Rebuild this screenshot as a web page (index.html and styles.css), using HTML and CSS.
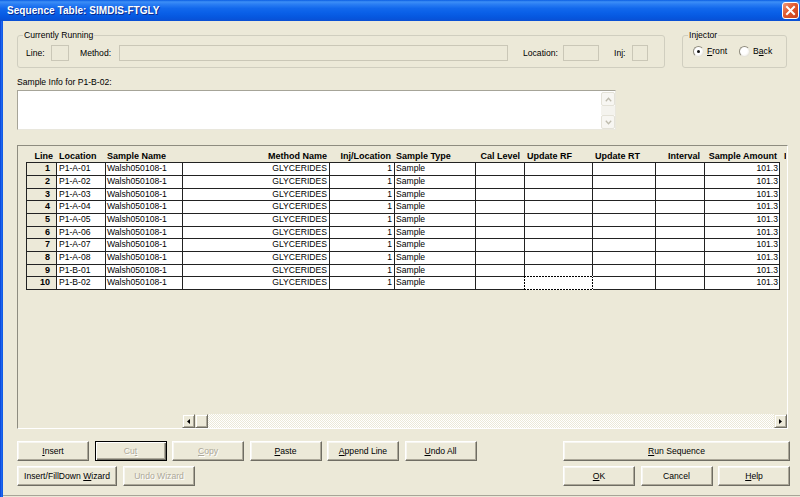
FILE: index.html
```html
<!DOCTYPE html>
<html>
<head>
<meta charset="utf-8">
<title>Sequence Table</title>
<link rel="stylesheet" href="styles.css">
</head>
<body>
<div class="window">
  <div class="titlebar">
    <span class="title">Sequence Table: SIMDIS-FTGLY</span>
    <span class="close"><svg viewBox="0 0 15 15" width="15" height="15"><path d="M4 4 L11 11 M11 4 L4 11" stroke="#fff" stroke-width="2" stroke-linecap="square"/></svg></span>
  </div>
  <div class="client">
    <div class="edge"></div>
    <div class="content">
      <div class="groups">
        <fieldset class="group running">
          <legend>Currently Running</legend>
          <div class="runrow">
            <span class="lbl l-line">Line:</span><span class="box b-line"></span>
            <span class="lbl l-method">Method:</span><span class="box b-method"></span>
            <span class="lbl l-loc">Location:</span><span class="box b-loc"></span>
            <span class="lbl l-inj">Inj:</span><span class="box b-inj"></span>
          </div>
        </fieldset>
        <fieldset class="group injector">
          <legend>Injector</legend>
          <div class="radios">
            <span class="radio checked"></span><span class="rlabel"><u>F</u>ront</span>
            <span class="radio r-back"></span><span class="rlabel">B<u>a</u>ck</span>
          </div>
        </fieldset>
      </div>
      <div class="infolabel">Sample Info for P1-B-02:</div>
      <div class="memo">
        <div class="vscroll">
          <span class="sbtn"><svg width="7" height="5" viewBox="0 0 7 5"><path d="M0.8 4.2 L3.5 1.3 L6.2 4.2" fill="none" stroke="#BEBBAD" stroke-width="1.3"/></svg></span>
          <span class="strack"></span>
          <span class="sbtn"><svg width="7" height="5" viewBox="0 0 7 5"><path d="M0.8 0.8 L3.5 3.7 L6.2 0.8" fill="none" stroke="#BEBBAD" stroke-width="1.3"/></svg></span>
        </div>
      </div>
      <div class="tableframe">
        <div class="thead">
          <div class="th r pr3">Line</div>
          <div class="th pl2">Location</div>
          <div class="th pl1">Sample Name</div>
          <div class="th r pr2">Method Name</div>
          <div class="th r pr3">Inj/Location</div>
          <div class="th pl1">Sample Type</div>
          <div class="th r pr4">Cal Level</div>
          <div class="th pl2">Update RF</div>
          <div class="th pl2">Update RT</div>
          <div class="th r pr4">Interval</div>
          <div class="th r pr2">Sample Amount</div>
          <div class="th pl4">I</div>
        </div>
        <div class="tbody">
          <div class="td num">1</div><div class="td pl2">P1-A-01</div><div class="td pl1">Walsh050108-1</div><div class="td r pr2">GLYCERIDES</div><div class="td r pr2">1</div><div class="td pl1">Sample</div><div class="td"></div><div class="td"></div><div class="td"></div><div class="td"></div><div class="td r pr1">101.3</div>
          <div class="td num">2</div><div class="td pl2">P1-A-02</div><div class="td pl1">Walsh050108-1</div><div class="td r pr2">GLYCERIDES</div><div class="td r pr2">1</div><div class="td pl1">Sample</div><div class="td"></div><div class="td"></div><div class="td"></div><div class="td"></div><div class="td r pr1">101.3</div>
          <div class="td num">3</div><div class="td pl2">P1-A-03</div><div class="td pl1">Walsh050108-1</div><div class="td r pr2">GLYCERIDES</div><div class="td r pr2">1</div><div class="td pl1">Sample</div><div class="td"></div><div class="td"></div><div class="td"></div><div class="td"></div><div class="td r pr1">101.3</div>
          <div class="td num">4</div><div class="td pl2">P1-A-04</div><div class="td pl1">Walsh050108-1</div><div class="td r pr2">GLYCERIDES</div><div class="td r pr2">1</div><div class="td pl1">Sample</div><div class="td"></div><div class="td"></div><div class="td"></div><div class="td"></div><div class="td r pr1">101.3</div>
          <div class="td num">5</div><div class="td pl2">P1-A-05</div><div class="td pl1">Walsh050108-1</div><div class="td r pr2">GLYCERIDES</div><div class="td r pr2">1</div><div class="td pl1">Sample</div><div class="td"></div><div class="td"></div><div class="td"></div><div class="td"></div><div class="td r pr1">101.3</div>
          <div class="td num">6</div><div class="td pl2">P1-A-06</div><div class="td pl1">Walsh050108-1</div><div class="td r pr2">GLYCERIDES</div><div class="td r pr2">1</div><div class="td pl1">Sample</div><div class="td"></div><div class="td"></div><div class="td"></div><div class="td"></div><div class="td r pr1">101.3</div>
          <div class="td num">7</div><div class="td pl2">P1-A-07</div><div class="td pl1">Walsh050108-1</div><div class="td r pr2">GLYCERIDES</div><div class="td r pr2">1</div><div class="td pl1">Sample</div><div class="td"></div><div class="td"></div><div class="td"></div><div class="td"></div><div class="td r pr1">101.3</div>
          <div class="td num">8</div><div class="td pl2">P1-A-08</div><div class="td pl1">Walsh050108-1</div><div class="td r pr2">GLYCERIDES</div><div class="td r pr2">1</div><div class="td pl1">Sample</div><div class="td"></div><div class="td"></div><div class="td"></div><div class="td"></div><div class="td r pr1">101.3</div>
          <div class="td num">9</div><div class="td pl2">P1-B-01</div><div class="td pl1">Walsh050108-1</div><div class="td r pr2">GLYCERIDES</div><div class="td r pr2">1</div><div class="td pl1">Sample</div><div class="td"></div><div class="td"></div><div class="td"></div><div class="td"></div><div class="td r pr1">101.3</div>
          <div class="td num">10</div><div class="td pl2">P1-B-02</div><div class="td pl1">Walsh050108-1</div><div class="td r pr2">GLYCERIDES</div><div class="td r pr2">1</div><div class="td pl1">Sample</div><div class="td"></div><div class="td focus"></div><div class="td"></div><div class="td"></div><div class="td r pr1">101.3</div>
        </div>
        <div class="hscroll">
          <span class="hbtn"><svg width="3" height="5" viewBox="0 0 3 5"><polygon points="3,0 0,2.5 3,5" fill="#000"/></svg></span>
          <span class="hbtn thumb"></span>
          <span class="htrack"></span>
          <span class="hbtn"><svg width="3" height="5" viewBox="0 0 3 5"><polygon points="0,0 3,2.5 0,5" fill="#000"/></svg></span>
        </div>
      </div>
      <div class="buttons">
        <div class="bleft">
          <div class="brow">
            <button class="btn"><u>I</u>nsert</button>
            <button class="btn default disabled">Cu<u>t</u></button>
            <button class="btn disabled"><u>C</u>opy</button>
            <button class="btn"><u>P</u>aste</button>
            <button class="btn"><u>A</u>ppend Line</button>
            <button class="btn"><u>U</u>ndo All</button>
          </div>
          <div class="brow">
            <button class="btn w100">Insert/FillDown <u>W</u>izard</button>
            <button class="btn disabled">Undo Wizard</button>
          </div>
        </div>
        <div class="bright">
          <div class="brow">
            <button class="btn wide"><u>R</u>un Sequence</button>
          </div>
          <div class="brow">
            <button class="btn"><u>O</u>K</button>
            <button class="btn">Cancel</button>
            <button class="btn"><u>H</u>elp</button>
          </div>
        </div>
      </div>
    </div>
  </div>
</div>
</body>
</html>
```

FILE: styles.css
```css
* { box-sizing: border-box; }
html, body { margin: 0; padding: 0; }
body {
  width: 800px;
  height: 497px;
  overflow: hidden;
  background: #ECE9D8;
  font-family: "Liberation Sans", Arial, sans-serif;
  font-size: 8.6px;
  color: #000;
}
u { text-decoration: underline; text-underline-offset: 1px; }

.window { width: 800px; height: 497px; display: flex; flex-direction: column; }

.titlebar {
  height: 21px;
  flex: none;
  display: flex;
  align-items: center;
  justify-content: space-between;
  padding: 0 1px 0 7px;
  background: linear-gradient(#0A5DE2 0%, #3D8FF6 9%, #2A7EF3 20%, #1268EC 40%, #0A60E8 60%, #0657DF 82%, #0A4FD3 100%);
}
.title {
  color: #fff;
  font-weight: bold;
  font-size: 10px;
  letter-spacing: 0.05px;
  text-shadow: 1px 1px 0 #0B2B8E;
}
.close {
  width: 17px;
  height: 17px;
  border: 1px solid #fff;
  border-radius: 3px;
  background: linear-gradient(135deg, #F09A7C 0%, #E0582E 45%, #C8401A 100%);
  display: flex;
  align-items: center;
  justify-content: center;
}

.client { flex: 1; display: flex; }
.edge { width: 3px; flex: none; background: linear-gradient(to right, #0A3FD3, #1D66EE, #0C56E3); }
.content {
  flex: 1;
  height: 475px;
  padding: 9px 0 0 14px;
  border-bottom: 1px solid #A7A598;
}

/* group boxes */
.groups { display: flex; align-items: flex-start; }
.group {
  margin: 0;
  min-width: 0;
  border: 1px solid #D0CEBF;
  border-radius: 3px;
  padding: 5px 0 6px 8px;
}
.group legend { padding: 0 1px; margin-left: -3px; line-height: 10px; }
.running { width: 648px; }
.injector { width: 105px; margin-left: 17px; padding: 4px 0 9px 10px; }
.injector legend { margin-left: -5px; }

.runrow { display: flex; align-items: center; height: 16px; }
.lbl { flex: none; line-height: 10px; }
.box { flex: none; height: 16px; border: 1px solid #CAC7B7; background: #ECE9D8; }
.l-line { width: 25px; }
.b-line { width: 18px; }
.l-method { width: 39px; margin-left: 11px; }
.b-method { width: 389px; }
.l-loc { width: 40px; margin-left: 15px; }
.b-loc { width: 36px; }
.l-inj { width: 18px; margin-left: 15px; }
.b-inj { width: 16px; }

.radios { display: flex; align-items: center; height: 14px; }
.radio {
  position: relative;
  flex: none;
  width: 11px;
  height: 11px;
  margin-right: 3px;
  border-radius: 50%;
  border: 1px solid;
  border-color: #8F8C7F #E6E4D9 #E6E4D9 #8F8C7F;
  background: radial-gradient(circle at 40% 40%, #FFFFFF 45%, #E9E7DD 100%);
}
.radio.checked::after {
  content: "";
  position: absolute;
  left: 3px;
  top: 3px;
  width: 3px;
  height: 3px;
  border-radius: 50%;
  background: #111;
}
.r-back { margin-left: 12px; }
.rlabel { line-height: 10px; }

/* sample info */
.infolabel { margin-top: 9px; line-height: 10px; }
.memo {
  width: 599px;
  height: 40px;
  margin-top: 3px;
  border: 1px solid;
  border-color: #A6A498 #E9E7DD #E9E7DD #A6A498;
  background: #fff;
  display: flex;
  justify-content: flex-end;
}
.vscroll { width: 14px; display: flex; flex-direction: column; padding-top: 1px; }
.sbtn {
  height: 14px;
  flex: none;
  border: 1px solid #E4E2D8;
  border-radius: 2px;
  background: #F7F6F2;
  display: flex;
  align-items: center;
  justify-content: center;
}
.strack { flex: 1; background: #F4F3EE; }

/* table */
.tableframe {
  width: 771px;
  height: 284px;
  margin-top: 15px;
  border: 1px solid;
  border-color: #8E8C80 #FFFFFF #FFFFFF #8E8C80;
  display: flex;
  flex-direction: column;
  overflow: hidden;
}
.thead, .tbody {
  display: grid;
  grid-template-columns: 29px 48px 76px 146px 64px 80px 48px 67px 62px 48px 74px;
  column-gap: 1px;
  margin-left: 8px;
  width: max-content;
}
.thead {
  grid-template-columns: 29px 48px 76px 146px 64px 80px 48px 67px 62px 48px 74px 6px;
  height: 16px;
  padding-left: 1px;
  flex: none;
}
.th {
  align-self: end;
  padding-bottom: 1px;
  font-weight: bold;
  font-size: 9px;
  line-height: 10px;
  white-space: nowrap;
  overflow: hidden;
}
.tbody {
  flex: none;
  row-gap: 1px;
  padding: 1px;
  grid-template-rows: 12px 12px 11px 12px 12px 11px 12px 12px 11px 12px;
  background: #222;
}
.td {
  background: #fff;
  line-height: 11.5px;
  white-space: nowrap;
  overflow: hidden;
  position: relative;
}
.td.num { background: #ECE9D8; font-weight: bold; font-size: 9px; text-align: right; padding-right: 6px; }
.r { text-align: right; }
.pl1 { padding-left: 1px; }
.pl2 { padding-left: 2px; }
.pl4 { padding-left: 4px; }
.pr1 { padding-right: 1px; }
.pr2 { padding-right: 2px; }
.pr3 { padding-right: 3px; }
.pr4 { padding-right: 4px; }
.td.focus { overflow: visible; }
.td.focus::after {
  content: "";
  position: absolute;
  left: -1px;
  top: -1px;
  right: -1px;
  bottom: -1px;
  background:
    repeating-linear-gradient(90deg, #000 0 2px, #fff 2px 3px) top left / 100% 1px no-repeat,
    repeating-linear-gradient(90deg, #000 0 2px, #fff 2px 3px) bottom left / 100% 1px no-repeat,
    repeating-linear-gradient(180deg, #000 0 2px, #fff 2px 3px) top left / 1px 100% no-repeat,
    repeating-linear-gradient(180deg, #000 0 2px, #fff 2px 3px) top right / 1px 100% no-repeat,
    #fff;
}

.hscroll { margin-top: auto; margin-left: 164px; height: 14px; display: flex; flex: none; }
.hbtn {
  width: 13px;
  height: 14px;
  flex: none;
  border: 1px solid;
  border-color: #ECE9D8 #716F64 #716F64 #ECE9D8;
  box-shadow: inset 1px 1px 0 #FFFFFF, inset -1px -1px 0 #ACA899;
  background: #ECE9D8;
  display: flex;
  align-items: center;
  justify-content: center;
}
.htrack {
  flex: 1;
  background: repeating-conic-gradient(#FFFFFF 0 25%, #ECE9D8 0 50%) 0 0 / 2px 2px;
}

/* buttons */
.buttons { display: flex; margin-top: 12px; padding-right: 10px; }
.bleft { display: flex; flex-direction: column; gap: 5px; }
.bright { margin-left: auto; width: 227px; display: flex; flex-direction: column; gap: 5px; }
.brow { display: flex; gap: 5.5px; }
.btn {
  width: 72px;
  height: 20px;
  margin: 0;
  padding: 0;
  font: inherit;
  color: #000;
  text-align: center;
  line-height: 17px;
  background: #ECE9D8;
  border: 1px solid;
  border-color: #FFFFFF #6F6D63 #6F6D63 #FFFFFF;
  box-shadow: inset -1px -1px 0 #ACA899, inset 1px 1px 0 #F7F6F1;
  -webkit-appearance: none;
  appearance: none;
  white-space: nowrap;
}
.btn.default {
  border-color: #000;
  box-shadow: inset 1px 1px 0 #FFFFFF, inset -1px -1px 0 #6F6D63, inset -2px -2px 0 #ACA899;
}
.btn.disabled { color: #ACA899; text-shadow: 1px 1px 0 #FFFFFF; }
.btn.w100 { width: 100px; margin-right: 0.5px; }
.btn.wide { width: 227px; }
```
